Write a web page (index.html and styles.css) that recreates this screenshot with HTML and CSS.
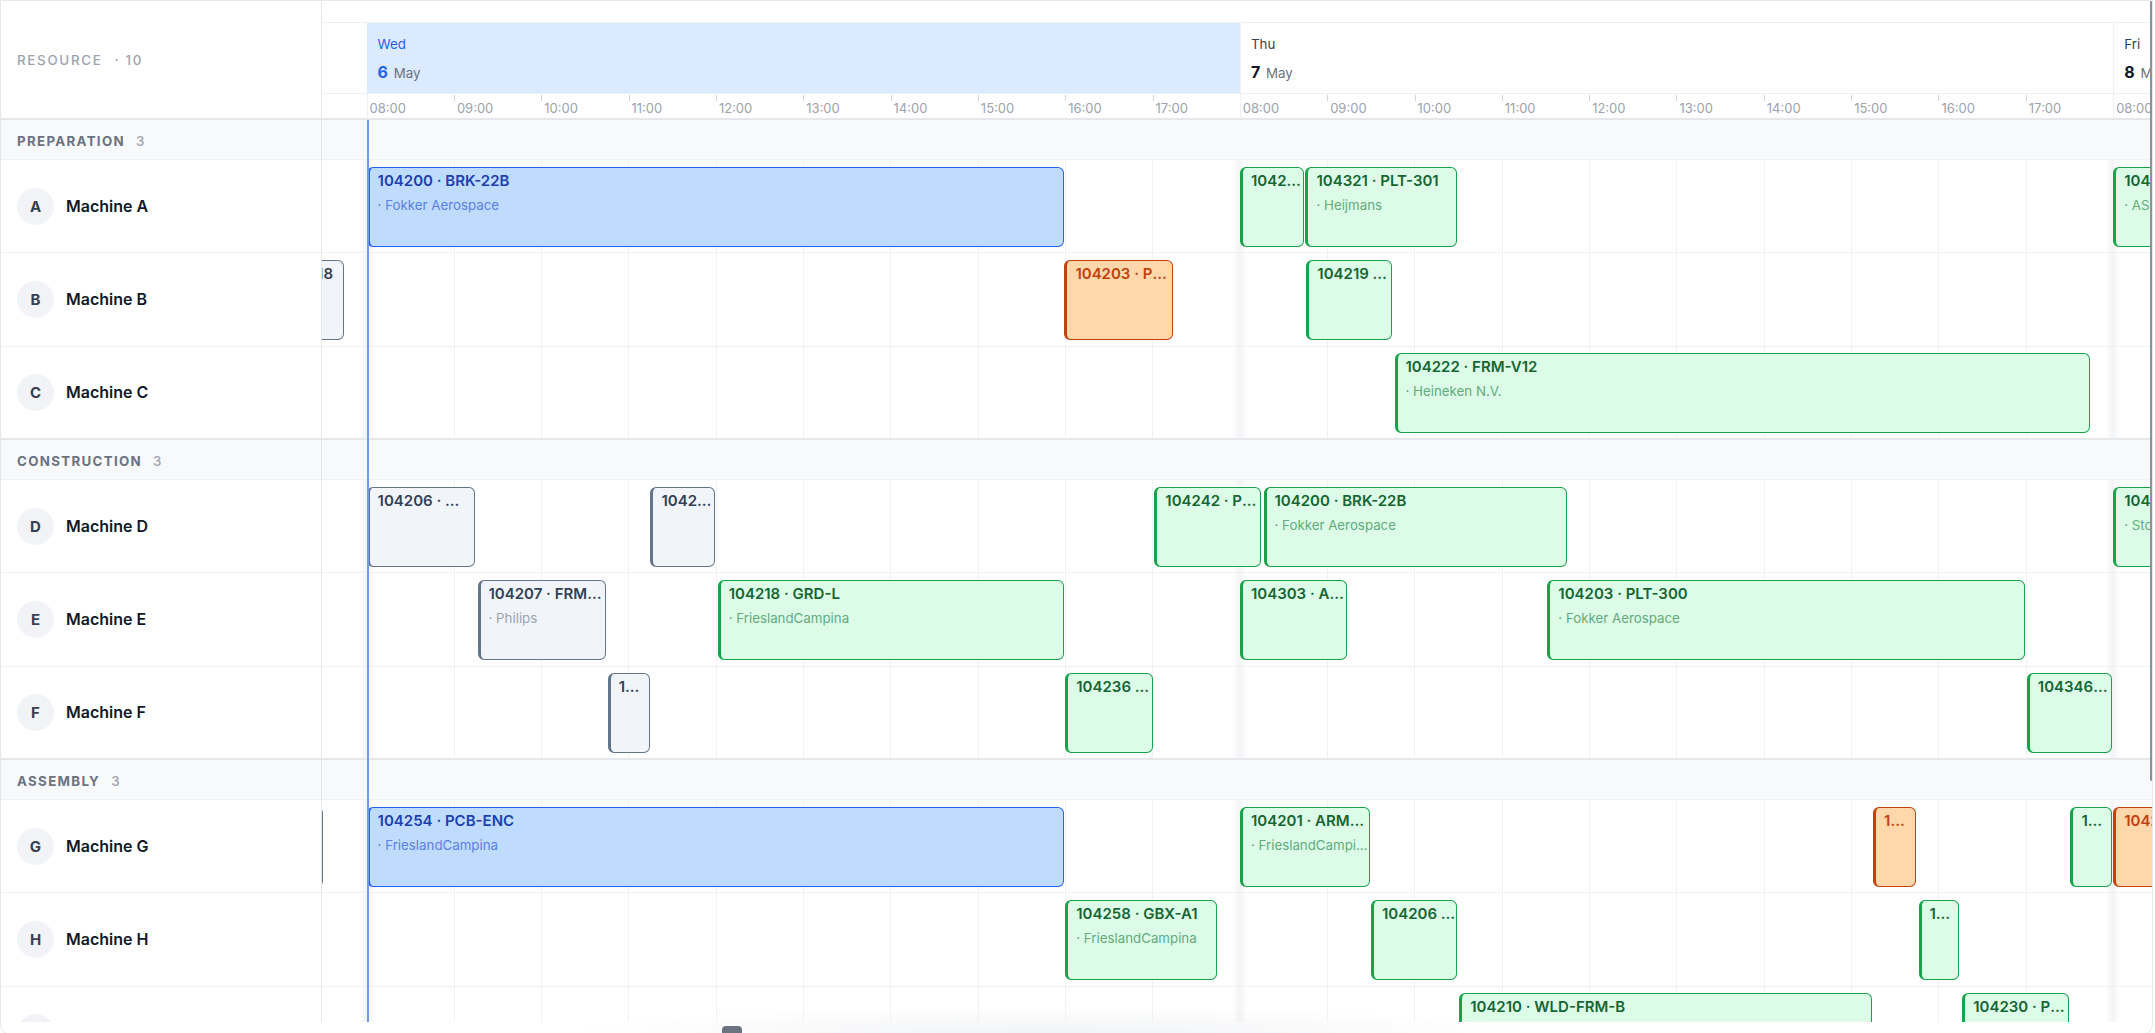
FILE: index.html
```html
<!DOCTYPE html>
<html lang="en">
<head>
    <meta charset="UTF-8">
    <meta name="viewport" content="width=device-width, initial-scale=1.0">
    <title>Production Planning</title>
    <link rel="stylesheet" href="styles.css">
</head>
<body>
    <div class="planner">
        <div class="board">
            <div class="sidebar">
                <div class="side-head">
                    <span class="side-title">Resource</span>
                    <span class="side-count">· 10</span>
                </div>

                <div class="group-label"><span class="group-name">Preparation</span><span class="group-count">3</span></div>
                <div class="resource"><span class="avatar">A</span><span class="res-name">Machine A</span></div>
                <div class="resource"><span class="avatar">B</span><span class="res-name">Machine B</span></div>
                <div class="resource resource-last"><span class="avatar">C</span><span class="res-name">Machine C</span></div>

                <div class="group-label"><span class="group-name">Construction</span><span class="group-count">3</span></div>
                <div class="resource"><span class="avatar">D</span><span class="res-name">Machine D</span></div>
                <div class="resource"><span class="avatar">E</span><span class="res-name">Machine E</span></div>
                <div class="resource resource-last"><span class="avatar">F</span><span class="res-name">Machine F</span></div>

                <div class="group-label"><span class="group-name">Assembly</span><span class="group-count">3</span></div>
                <div class="resource"><span class="avatar">G</span><span class="res-name">Machine G</span></div>
                <div class="resource"><span class="avatar">H</span><span class="res-name">Machine H</span></div>
                <div class="resource resource-last"><span class="avatar">I</span><span class="res-name">Machine I</span></div>
            </div>

            <div class="timeline">
                <div class="track" id="track">
                    <div class="tl-head">
                        <div class="head-spacer"></div>
                        <div class="day-row" id="day-row"></div>
                        <div class="hour-row" id="hour-row"></div>
                    </div>
                    <div class="tl-body" id="tl-body">
                        <!-- lanes are built below -->
                    </div>
                </div>
                <div class="now-line"></div>
            </div>
        </div>
        <div class="hscroll"><div class="hscroll-glow"></div><div class="hscroll-thumb"></div></div>
        <div class="vscroll-thumb"></div>
    </div>

    <script>
        // 10 working hours per day, 08:00 - 18:00
        const HOUR = 87.333;
        const DAY = HOUR * 10;

        const days = [
            { name: 'Tue', date: 5 },
            { name: 'Wed', date: 6, today: true },
            { name: 'Thu', date: 7 },
            { name: 'Fri', date: 8 }
        ];

        // job times are in working hours counted from Wed 08:00
        const groups = [
            [
                [[0, 7.99, 'blue', '104200 · BRK-22B', 'Fokker Aerospace'],
                 [10, 10.73, 'green', '104212 · BRK-22B'],
                 [10.75, 12.49, 'green', '104321 · PLT-301', 'Heijmans'],
                 [20, 22.5, 'green', '104215 · PCB-ENC', 'ASML']],
                [[-1.1, -0.26, 'gray', '104218'],
                 [7.99, 9.23, 'orange', '104203 · PLT-300'],
                 [10.76, 11.74, 'green', '104219 · GRD-L']],
                [[11.77, 19.73, 'green', '104222 · FRM-V12', 'Heineken N.V.']]
            ],
            [
                [[0, 1.24, 'gray', '104206 · WLD-FRM-B'],
                 [3.25, 3.99, 'gray', '104211 · GBX-A1'],
                 [9.02, 10.24, 'green', '104242 · PCB-ENC'],
                 [10.27, 13.74, 'green', '104200 · BRK-22B', 'Fokker Aerospace'],
                 [20, 22, 'green', '104247 · FRM-V12', 'Stork']],
                [[1.27, 2.74, 'gray', '104207 · FRM-V12', 'Philips'],
                 [4.02, 7.98, 'green', '104218 · GRD-L', 'FrieslandCampina'],
                 [10, 11.23, 'green', '104303 · ARM-7'],
                 [13.52, 18.99, 'green', '104203 · PLT-300', 'Fokker Aerospace']],
                [[2.76, 3.24, 'gray', '104214 · GRD-L'],
                 [8, 9, 'green', '104236 · WLD-FRM-B'],
                 [19.01, 19.98, 'green', '104346 · PLT-301']]
            ],
            [
                [[-1.5, -0.5, 'gray', '104199 · ARM-7'],
                 [0, 7.99, 'blue', '104254 · PCB-ENC', 'FrieslandCampina'],
                 [10, 11.49, 'green', '104201 · ARM-72B', 'FrieslandCampina'],
                 [17.25, 17.74, 'orange', '104225 · GBX-A1'],
                 [19.51, 19.98, 'green', '104233 · PLT-300'],
                 [20, 21.5, 'orange', '104240 · FRM-V12']],
                [[8, 9.74, 'green', '104258 · GBX-A1', 'FrieslandCampina'],
                 [11.5, 12.49, 'green', '104206 · WLD-FRM-B'],
                 [17.77, 18.23, 'green', '104229 · GRD-L']],
                [[12.51, 17.24, 'green', '104210 · WLD-FRM-B'],
                 [18.27, 19.49, 'green', '104230 · PCB-ENC']]
            ]
        ];

        const posX = h => DAY + h * HOUR;
        const pad = n => String(n).padStart(2, '0');

        document.getElementById('day-row').innerHTML = days.map(d => `
            <div class="day ${d.today ? 'day-today' : ''}">
                <div class="day-name">${d.name}</div>
                <div class="day-date"><b>${d.date}</b> May</div>
            </div>
        `).join('');

        document.getElementById('hour-row').innerHTML = days.map(() =>
            Array.from({ length: 10 }, (_, i) =>
                `<div class="hour ${i === 0 ? 'hour-first' : ''}">${pad(8 + i)}:00</div>`
            ).join('')
        ).join('');

        const shades = days.slice(1).map((_, i) =>
            `<div class="day-shade" style="left:${(i + 1) * DAY - 7}px"></div>`
        ).join('');

        function jobHtml([start, end, color, title, sub]) {
            return `
                <div class="job job-${color}" style="left:${posX(start)}px;width:${(end - start) * HOUR}px">
                    <div class="job-title">${title}</div>
                    ${sub ? `<div class="job-sub">· ${sub}</div>` : ''}
                </div>`;
        }

        document.getElementById('tl-body').innerHTML = groups.map(rows => `
            <div class="band"></div>
            ${rows.map((jobs, i) => `
                <div class="lane ${i === rows.length - 1 ? 'lane-last' : ''}">
                    ${shades}
                    ${jobs.map(jobHtml).join('')}
                </div>
            `).join('')}
        `).join('');

        // scroll the board so Wed 08:00 sits just right of the resource column
        document.getElementById('track').style.marginLeft = `${-(DAY - 44.6)}px`;
    </script>
</body>
</html>
```

FILE: styles.css
```css
html, body {
    margin: 0;
    height: 100%;
    overflow: hidden;
    background-color: white;
}
body {
    font-family: Inter, "Noto Sans", sans-serif;
    color: #111827;
}
.planner {
    position: relative;
    width: 2153px;
    height: 1036px;
    box-sizing: border-box;
    border: 1px solid #e5e7eb;
    border-radius: 0 0 12px 12px;
    overflow: hidden;
}
.board {
    display: flex;
    height: 1021px;
}

/* resource column */
.sidebar {
    width: 320px;
    flex: none;
    border-right: 1px solid #e5e7eb;
    overflow: hidden;
}
.side-head {
    height: 119px;
    box-sizing: border-box;
    border-bottom: 2px solid #e5e7eb;
    display: flex;
    align-items: center;
    gap: 12px;
    padding-left: 16px;
    font-size: 13.3px;
    font-weight: 500;
    color: #9ca3af;
    letter-spacing: 0.13em;
}
.side-title {
    text-transform: uppercase;
}
.group-label {
    height: 40px;
    box-sizing: border-box;
    border-bottom: 1px solid #eef0f2;
    background-color: #f8f9fb;
    display: flex;
    align-items: center;
    padding: 3px 0 0 16px;
    font-size: 13.3px;
}
.group-name {
    font-weight: 700;
    color: #6b7280;
    text-transform: uppercase;
    letter-spacing: 0.1em;
}
.group-count {
    margin-left: 11px;
    color: #9ca3af;
    font-weight: 500;
}
.resource {
    height: 93.333px;
    box-sizing: border-box;
    border-bottom: 1px solid #f0f1f3;
    display: flex;
    align-items: center;
    gap: 12px;
    padding-left: 16px;
}
.resource-last {
    border-bottom: 2px solid #e5e7eb;
}
.avatar {
    width: 37px;
    height: 37px;
    border-radius: 50%;
    background-color: #f1f3f6;
    display: flex;
    align-items: center;
    justify-content: center;
    font-size: 15px;
    font-weight: 700;
    color: #374151;
}
.res-name {
    font-size: 16px;
    font-weight: 600;
    color: #111827;
}

/* timeline */
.timeline {
    position: relative;
    flex: 1;
    overflow: hidden;
}
.track {
    width: 3493.33px;
}
.tl-head {
    height: 119px;
    box-sizing: border-box;
    border-bottom: 2px solid #e5e7eb;
}
.head-spacer {
    height: 21px;
    border-bottom: 1px solid #eef0f2;
}
.day-row {
    display: flex;
    height: 71px;
    box-sizing: border-box;
    border-bottom: 1px solid #eef0f2;
}
.day {
    width: 873.33px;
    flex: none;
    box-sizing: border-box;
    border-left: 1px solid #eef0f2;
    padding: 12px 0 0 10px;
    font-size: 13.3px;
    color: #6b7280;
}
.day-today {
    background-color: #dbeafe;
    border-left-color: #dbeafe;
}
.day-name {
    line-height: 18px;
    color: #374151;
}
.day-date {
    margin-top: 8px;
    line-height: 22px;
}
.day-date b {
    font-size: 16px;
    font-weight: 700;
    color: #111827;
    margin-right: 2px;
}
.day-today .day-name,
.day-today .day-date b {
    color: #2563eb;
}
.hour-row {
    display: flex;
    height: 24px;
}
.hour {
    position: relative;
    width: 87.333px;
    flex: none;
    box-sizing: border-box;
    padding: 4px 0 0 3px;
    line-height: 20px;
    font-size: 13px;
    color: #9ca3af;
}
.hour::before {
    content: "";
    position: absolute;
    left: 0;
    top: 1px;
    width: 1px;
    height: 6px;
    background-color: #d1d5db;
}
.hour-first::before {
    top: 0;
    height: 100%;
    background-color: #eef0f2;
}

.band {
    height: 40px;
    box-sizing: border-box;
    border-bottom: 1px solid #eef0f2;
    background-color: #f8f9fb;
}
.lane {
    position: relative;
    height: 93.333px;
    box-sizing: border-box;
    border-bottom: 1px solid #f0f1f3;
    background-image: repeating-linear-gradient(to right, #f1f2f4 0 1px, transparent 1px 87.333px);
}
.lane-last {
    border-bottom: 2px solid #e5e7eb;
}
.day-shade {
    position: absolute;
    top: 0;
    bottom: 0;
    width: 14px;
    background: linear-gradient(to right, rgba(241, 243, 246, 0), #f3f4f6 45%, #f5f6f8 60%, rgba(241, 243, 246, 0));
}
.now-line {
    position: absolute;
    left: 45px;
    top: 119px;
    bottom: 0;
    width: 2px;
    background-color: #7099f0;
    z-index: 3;
}

/* jobs */
.job {
    position: absolute;
    top: 6.67px;
    height: 80px;
    box-sizing: border-box;
    border: 1px solid;
    border-left-width: 3px;
    border-radius: 6px;
    padding: 4px 1px 0 8px;
    overflow: hidden;
}
.job-title {
    font-size: 15px;
    font-weight: 600;
    line-height: 18px;
    white-space: nowrap;
    overflow: hidden;
    text-overflow: ellipsis;
}
.job-sub {
    margin-top: 6px;
    font-size: 13.3px;
    line-height: 18px;
    white-space: nowrap;
    overflow: hidden;
    text-overflow: ellipsis;
}
.job-blue {
    background-color: #bfdbfe;
    border-color: #2563eb;
}
.job-blue .job-title { color: #1e40af; }
.job-blue .job-sub { color: #5b80e4; }
.job-green {
    background-color: #dcfce7;
    border-color: #16a34a;
}
.job-green .job-title { color: #166534; }
.job-green .job-sub { color: #62ab7e; }
.job-orange {
    background-color: #fed7aa;
    border-color: #c2410c;
}
.job-orange .job-title { color: #c2410c; }
.job-gray {
    background-color: #f1f5f9;
    border-color: #64748b;
}
.job-gray .job-title { color: #334155; }
.job-gray .job-sub { color: #9ca3af; }

/* scroll bars */
.hscroll {
    position: relative;
    height: 14px;
}
.hscroll-glow {
    position: absolute;
    left: 560px;
    bottom: -10px;
    width: 980px;
    height: 40px;
    border-radius: 50%;
    background: radial-gradient(ellipse at 50% 70%, rgba(236, 238, 241, 0.7), rgba(255, 255, 255, 0) 70%);
}
.hscroll-thumb {
    position: absolute;
    left: 721px;
    top: 4px;
    width: 20px;
    height: 10px;
    border-radius: 4px;
    background-color: #6b7280;
}
.vscroll-thumb {
    position: absolute;
    right: 0;
    top: 0;
    width: 2px;
    height: 780px;
    border-radius: 1px;
    background-color: #8b9099;
    z-index: 4;
}
```
